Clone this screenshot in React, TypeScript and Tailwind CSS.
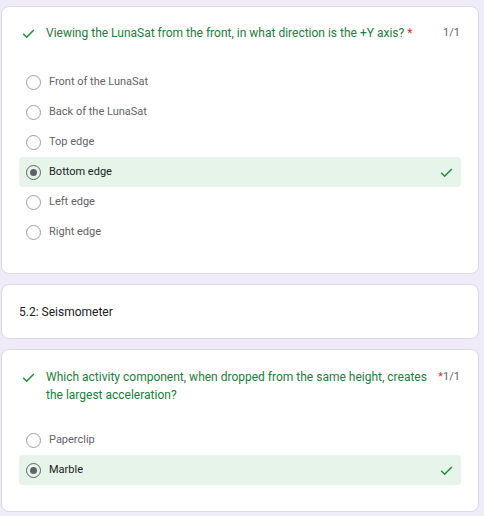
import React from 'react';

interface Option {
  label: string;
  selected?: boolean;
}

const Check = ({ className = '' }: { className?: string }) => (
  <svg viewBox="0 0 24 24" className={className} fill="none" stroke="currentColor" strokeWidth="2.4">
    <path d="M3.5 12.5l5.5 5.5L20.5 6.5" />
  </svg>
);

const Radio = ({ selected }: { selected?: boolean }) => (
  <div
    className={`w-[15px] h-[15px] rounded-full border-[1.5px] flex items-center justify-center shrink-0 ${
      selected ? 'border-[#5f6368]' : 'border-[#9aa0a6]'
    }`}
  >
    {selected && <div className="w-[7px] h-[7px] rounded-full bg-[#5f6368]" />}
  </div>
);

const OptionRow = ({ option }: { option: Option }) => (
  <div
    className={`h-[30px] flex items-center pl-[7px] pr-[7px] rounded-[4px] ${
      option.selected ? 'bg-[#e6f4ea]' : ''
    }`}
  >
    <Radio selected={option.selected} />
    <span
      className={`ml-[8px] text-[11px] flex-1 ${option.selected ? 'text-[#202124]' : 'text-[#5f6368]'}`}
    >
      {option.label}
    </span>
    {option.selected && <Check className="w-[15px] h-[15px] text-[#1e8e3e]" />}
  </div>
);

const Card = ({ children, className = '' }: { children: React.ReactNode; className?: string }) => (
  <div className={`bg-white rounded-[8px] border border-[#dadce0] ${className}`}>{children}</div>
);

export default function App() {
  const q1: Option[] = [
    { label: 'Front of the LunaSat' },
    { label: 'Back of the LunaSat' },
    { label: 'Top edge' },
    { label: 'Bottom edge', selected: true },
    { label: 'Left edge' },
    { label: 'Right edge' },
  ];
  const q2: Option[] = [{ label: 'Paperclip' }, { label: 'Marble', selected: true }];

  return (
    <div
      className="min-h-[516px] bg-[#f0ebf8] pt-[6px] pl-[1px] pr-[5px] flex flex-col gap-[10px]"
      style={{ fontFamily: 'Roboto, "Liberation Sans", sans-serif' }}
    >
      {/* Question 1 */}
      <Card className="pt-[17px] pb-[26px] px-[17px]">
        <div className="flex items-start">
          <Check className="w-[15px] h-[15px] text-[#1e8e3e] mt-[2px] ml-[2px] shrink-0" />
          <div className="ml-[10px] flex-1 text-[12px] leading-[18px] text-[#188038]">
            Viewing the LunaSat from the front, in what direction is the +Y axis?{' '}
            <span className="text-[#d93025]">*</span>
          </div>
          <div className="text-[11px] leading-[18px] text-[#5f6368] pr-[1px]">1/1</div>
        </div>
        <div className="mt-[25px]">
          {q1.map((o) => (
            <OptionRow key={o.label} option={o} />
          ))}
        </div>
      </Card>

      {/* Section header */}
      <Card className="h-[55px] px-[17px] flex items-center">
        <span className="text-[12px] text-[#202124]">5.2: Seismometer</span>
      </Card>

      {/* Question 2 */}
      <Card className="pt-[18px] pb-[26px] px-[17px]">
        <div className="flex items-start">
          <Check className="w-[15px] h-[15px] text-[#1e8e3e] mt-[2px] ml-[2px] shrink-0" />
          <div className="ml-[10px] flex-1 text-[12px] leading-[18px] text-[#188038] pr-[8px]">
            Which activity component, when dropped from the same height, creates the largest acceleration?
          </div>
          <div className="text-[11px] leading-[18px] text-[#5f6368] pr-[1px]">
            <span className="text-[#d93025]">*</span>1/1
          </div>
        </div>
        <div className="mt-[21px]">
          {q2.map((o) => (
            <OptionRow key={o.label} option={o} />
          ))}
        </div>
      </Card>
    </div>
  );
}
